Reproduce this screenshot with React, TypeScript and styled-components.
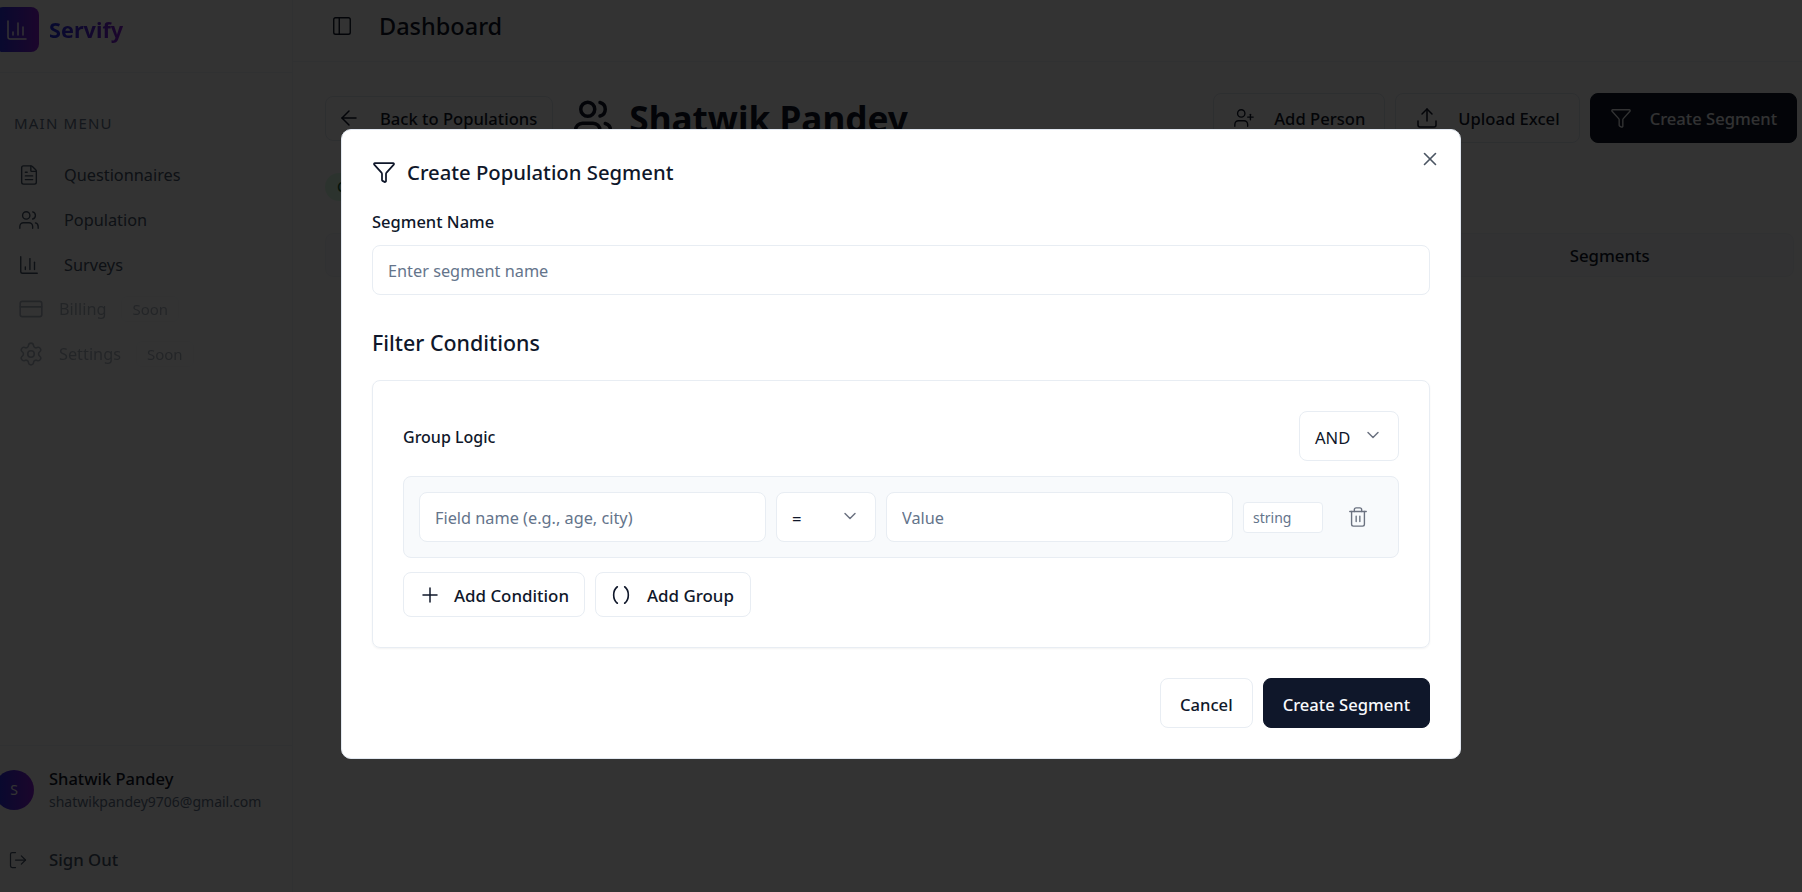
import React from "react";
import styled, { createGlobalStyle } from "styled-components";
import {
  ArrowLeft, BarChart3, ChevronDown, CreditCard, FileText, Filter, LogOut, PanelLeft,
  Parentheses, Plus, Settings, Trash2, Upload, UserPlus, Users, X,
} from "lucide-react";

const Global = createGlobalStyle`
  html, body { margin: 0; padding: 0; height: 100%; overflow: hidden; background: #fff; }
  body { font-family: "Noto Sans", "Open Sans", "Liberation Sans", sans-serif; color: #0f172a; }
  * { box-sizing: border-box; }
  input::placeholder { color: #64748b; opacity: 1; }
`;

const brandGradient = "linear-gradient(90deg, #2030e8, #8a20d8)";

const Page = styled.div`
  display: flex;
  width: 1810px;
  height: 892px;
  margin-left: -8px;
`;

const Sidebar = styled.aside`
  width: 301px;
  flex: none;
  display: flex;
  flex-direction: column;
  border-right: 1px solid #f1f5f9;
`;

const Brand = styled.div`
  height: 73px;
  display: flex;
  align-items: center;
  gap: 10px;
  padding-left: 3px;
  border-bottom: 1px solid #f1f5f9;
`;

const Logo = styled.div`
  width: 44px;
  height: 45px;
  margin-top: -13px;
  border-radius: 8px;
  background: ${brandGradient};
  display: flex;
  align-items: center;
  justify-content: center;
  color: #fff;
`;

const BrandName = styled.span`
  margin-top: -13px;
  font-size: 21.7px;
  font-weight: 700;
  background: ${brandGradient};
  -webkit-background-clip: text;
  background-clip: text;
  color: transparent;
`;

const MenuTitle = styled.div`
  margin: 40px 0 0 22px;
  font-size: 15px;
  letter-spacing: 1.2px;
  line-height: 20px;
  color: #64748b;
`;

const Menu = styled.nav`
  margin-top: 19px;
  display: flex;
  flex-direction: column;
`;

const MenuItem = styled.div<{ $soon?: boolean }>`
  height: 45px;
  display: flex;
  align-items: center;
  padding-left: 26px;
  padding-bottom: ${(p) => (p.$soon ? "2px" : "0")};
  gap: ${(p) => (p.$soon ? "15px" : "24px")};
  font-size: 16.3px;
  color: ${(p) => (p.$soon ? "#64748b" : "#475569")};
  opacity: ${(p) => (p.$soon ? 0.5 : 1)};
`;

const SoonTag = styled.span`
  padding: 2px 10px;
  font-size: 15px;
  border: 1px solid #f1f5f9;
  border-radius: 6px;
`;

const SideFoot = styled.div`
  margin-top: auto;
  border-top: 1px solid #f1f5f9;
  padding: 21px 0 0 2px;
  height: 147px;
`;

const UserRow = styled.div`
  display: flex;
  align-items: center;
  gap: 15px;
`;

const Avatar = styled.div`
  width: 40px;
  height: 40px;
  flex: none;
  border-radius: 50%;
  background: ${brandGradient};
  color: #fff;
  display: flex;
  align-items: center;
  justify-content: center;
  font-size: 14px;
`;

const UserName = styled.div`
  font-size: 16.5px;
  font-weight: 500;
  line-height: 24px;
`;

const UserMail = styled.div`
  font-size: 14px;
  line-height: 21px;
  color: #64748b;
`;

const SignOut = styled.div`
  margin: 36px 0 0 14px;
  display: flex;
  align-items: center;
  gap: 21px;
  font-size: 16.8px;
  font-weight: 500;
  color: #475569;
`;

const Main = styled.main`
  flex: 1;
  min-width: 0;
  display: flex;
  flex-direction: column;
`;

const TopBar = styled.header`
  height: 62px;
  display: flex;
  align-items: center;
  gap: 26px;
  padding: 0 0 10px 38px;
  border-bottom: 1px solid #f1f5f9;
`;

const TopTitle = styled.h1`
  margin: 0;
  font-size: 23.5px;
  font-weight: 500;
`;

const Content = styled.div`
  padding: 31px 5px 0 32px;
`;

const HeaderRow = styled.div`
  display: flex;
  align-items: center;
  gap: 19px;
`;

const GhostButton = styled.div`
  height: 50px;
  display: flex;
  align-items: center;
  gap: 19px;
  padding: 0 19px;
  border: 1px solid #e2e8f0;
  border-radius: 8px;
  font-size: 16.6px;
  font-weight: 500;
  background: #fff;
  white-space: nowrap;
`;

const BackButton = styled(GhostButton)`
  height: 45px;
  padding: 0 15px 0 11px;
`;

const DarkButton = styled(GhostButton)`
  gap: 18px;
  background: #0f172a;
  border-color: #0f172a;
  color: #f8fafc;
`;

const PopTitle = styled.h2`
  margin: 0;
  display: flex;
  align-items: center;
  gap: 15px;
  font-size: 35.2px;
  font-weight: 700;
  flex: 1;
  white-space: nowrap;
`;

const Actions = styled.div`
  display: flex;
  gap: 10px;
`;

const StatusBadge = styled.div`
  width: 60px;
  height: 28px;
  margin-top: 30px;
  padding-left: 12px;
  border-radius: 14px;
  background: #dcfce7;
  color: #166534;
  font-size: 14px;
  font-weight: 500;
  line-height: 28px;
`;

const Tabs = styled.div`
  margin: 32px 3px 0 0;
  height: 44px;
  display: grid;
  grid-template-columns: repeat(4, 1fr);
  background: #f8fafc;
  border: 1px solid #f1f5f9;
  border-radius: 8px;
`;

const Tab = styled.div`
  display: flex;
  align-items: center;
  justify-content: center;
  font-size: 16.8px;
  font-weight: 500;
`;

const Overlay = styled.div`
  position: fixed;
  inset: 0;
  background: rgba(0, 0, 0, 0.8);
`;

const Modal = styled.div`
  position: fixed;
  left: 341px;
  top: 129px;
  width: 1120px;
  height: 630px;
  padding: 28px 30px 0;
  background: #fff;
  border-radius: 10px;
  border: 1px solid #e2e8f0;
  display: flex;
  flex-direction: column;
`;

const CloseButton = styled.div`
  position: absolute;
  top: 18px;
  right: 19px;
  color: #4b5563;
  display: flex;
`;

const ModalTitle = styled.h3`
  margin: 0;
  display: flex;
  align-items: center;
  gap: 11px;
  font-size: 20.3px;
  font-weight: 500;
  line-height: 28px;
`;

const FieldLabel = styled.label`
  margin: 24px 0 11px;
  font-size: 16.5px;
  font-weight: 500;
  line-height: 24px;
`;

const TextInput = styled.input<{ $grow?: boolean }>`
  height: 50px;
  padding: 2px 15px 0;
  border: 1px solid #e8edf3;
  border-radius: 8px;
  font: inherit;
  font-size: 16.3px;
  background: #fff;
  min-width: 0;
  flex: ${(p) => (p.$grow ? 1 : "none")};
`;

const SectionTitle = styled.h4`
  margin: 34px 0 0;
  font-size: 21.4px;
  font-weight: 500;
  line-height: 28px;
`;

const ConditionCard = styled.div`
  margin-top: 23px;
  padding: 30px;
  border: 1px solid #e8edf3;
  border-radius: 8px;
  box-shadow: 0 1px 2px rgba(0, 0, 0, 0.05);
`;

const LogicRow = styled.div`
  display: flex;
  align-items: center;
  justify-content: space-between;
`;

const LogicLabel = styled.span`
  font-size: 16px;
  font-weight: 500;
  padding-top: 2px;
`;

const Select = styled.div`
  width: 100px;
  height: 50px;
  padding: 0 15px;
  border: 1px solid #e8edf3;
  border-radius: 8px;
  background: #fff;
  display: flex;
  align-items: center;
  justify-content: space-between;
  font-size: 16.6px;
  flex: none;
`;

const SelectText = styled.span`
  padding-top: 2px;
`;

const Chevron = styled(ChevronDown)`
  color: #6b7280;
  margin-top: -3px;
`;

const ConditionRow = styled.div`
  margin-top: 15px;
  height: 82px;
  padding: 15px;
  background: #f8fafc;
  border: 1px solid #e8edf3;
  border-radius: 8px;
  display: flex;
  align-items: center;
  gap: 10px;
`;

const TypeInput = styled.input`
  width: 80px;
  height: 31px;
  padding: 0 9px;
  border: 1px solid #e8edf3;
  border-radius: 4px;
  font: inherit;
  font-size: 14px;
  background: #fff;
  flex: none;
`;

const TrashButton = styled.div`
  width: 50px;
  height: 40px;
  flex: none;
  display: flex;
  align-items: center;
  justify-content: center;
  color: #6b7280;
`;

const AddRow = styled.div`
  margin-top: 14px;
  display: flex;
  gap: 10px;
`;

const AddButton = styled.div`
  height: 45px;
  padding: 0 15px 0 14px;
  display: flex;
  align-items: center;
  gap: 12px;
  border: 1px solid #e8edf3;
  border-radius: 8px;
  font-size: 16.9px;
  font-weight: 500;
  white-space: nowrap;
`;

const AddText = styled.span`
  padding-top: 2px;
`;

const GroupButton = styled(AddButton)`
  gap: 15px;
  padding-right: 16px;
`;

const Footer = styled.div`
  margin-top: 30px;
  display: flex;
  justify-content: flex-end;
  gap: 10px;
`;

const FooterButton = styled.div<{ $primary?: boolean }>`
  height: 50px;
  padding: 2px 19px 0;
  display: flex;
  align-items: center;
  border-radius: 8px;
  border: 1px solid ${(p) => (p.$primary ? "#0f172a" : "#e8edf3")};
  background: ${(p) => (p.$primary ? "#0f172a" : "#fff")};
  color: ${(p) => (p.$primary ? "#f8fafc" : "#0f172a")};
  font-size: 16.6px;
  font-weight: 500;
`;

export default function App() {
  return (
    <>
      <Global />
      <Page>
        <Sidebar>
          <Brand>
            <Logo><BarChart3 size={24} strokeWidth={1.5} /></Logo>
            <BrandName>Servify</BrandName>
          </Brand>
          <MenuTitle>MAIN MENU</MenuTitle>
          <Menu>
            <MenuItem><FileText size={22} strokeWidth={1.5} />Questionnaires</MenuItem>
            <MenuItem><Users size={22} strokeWidth={1.5} />Population</MenuItem>
            <MenuItem><BarChart3 size={22} strokeWidth={1.5} />Surveys</MenuItem>
            <MenuItem $soon><CreditCard size={26} strokeWidth={1.5} />Billing<SoonTag>Soon</SoonTag></MenuItem>
            <MenuItem $soon><Settings size={26} strokeWidth={1.5} />Settings<SoonTag>Soon</SoonTag></MenuItem>
          </Menu>
          <SideFoot>
            <UserRow>
              <Avatar>S</Avatar>
              <div>
                <UserName>Shatwik Pandey</UserName>
                <UserMail>shatwikpandey9706@gmail.com</UserMail>
              </div>
            </UserRow>
            <SignOut><LogOut size={20} strokeWidth={1.5} />Sign Out</SignOut>
          </SideFoot>
        </Sidebar>
        <Main>
          <TopBar>
            <PanelLeft size={22} strokeWidth={1.5} />
            <TopTitle>Dashboard</TopTitle>
          </TopBar>
          <Content>
            <HeaderRow>
              <BackButton><ArrowLeft size={24} strokeWidth={1.5} />Back to Populations</BackButton>
              <PopTitle><Users size={42} strokeWidth={2} />Shatwik Pandey</PopTitle>
              <Actions>
                <GhostButton><UserPlus size={22} strokeWidth={1.5} />Add Person</GhostButton>
                <GhostButton><Upload size={24} strokeWidth={1.5} />Upload Excel</GhostButton>
                <DarkButton><Filter size={22} strokeWidth={1.5} />Create Segment</DarkButton>
              </Actions>
            </HeaderRow>
            <StatusBadge>C</StatusBadge>
            <Tabs>
              <Tab />
              <Tab />
              <Tab />
              <Tab>Segments</Tab>
            </Tabs>
          </Content>
        </Main>
      </Page>
      <Overlay />
      <Modal>
        <CloseButton><X size={22} strokeWidth={1.75} /></CloseButton>
        <ModalTitle><Filter size={24} strokeWidth={1.75} />Create Population Segment</ModalTitle>
        <FieldLabel>Segment Name</FieldLabel>
        <TextInput placeholder="Enter segment name" />
        <SectionTitle>Filter Conditions</SectionTitle>
        <ConditionCard>
          <LogicRow>
            <LogicLabel>Group Logic</LogicLabel>
            <Select><SelectText>AND</SelectText><Chevron size={20} strokeWidth={1.75} /></Select>
          </LogicRow>
          <ConditionRow>
            <TextInput $grow placeholder="Field name (e.g., age, city)" />
            <Select><SelectText>=</SelectText><Chevron size={20} strokeWidth={1.75} /></Select>
            <TextInput $grow placeholder="Value" />
            <TypeInput placeholder="string" />
            <TrashButton><Trash2 size={22} strokeWidth={1.5} /></TrashButton>
          </ConditionRow>
          <AddRow>
            <AddButton><Plus size={24} strokeWidth={1.5} /><AddText>Add Condition</AddText></AddButton>
            <GroupButton><Parentheses size={22} strokeWidth={1.75} /><AddText>Add Group</AddText></GroupButton>
          </AddRow>
        </ConditionCard>
        <Footer>
          <FooterButton>Cancel</FooterButton>
          <FooterButton $primary>Create Segment</FooterButton>
        </Footer>
      </Modal>
    </>
  );
}
